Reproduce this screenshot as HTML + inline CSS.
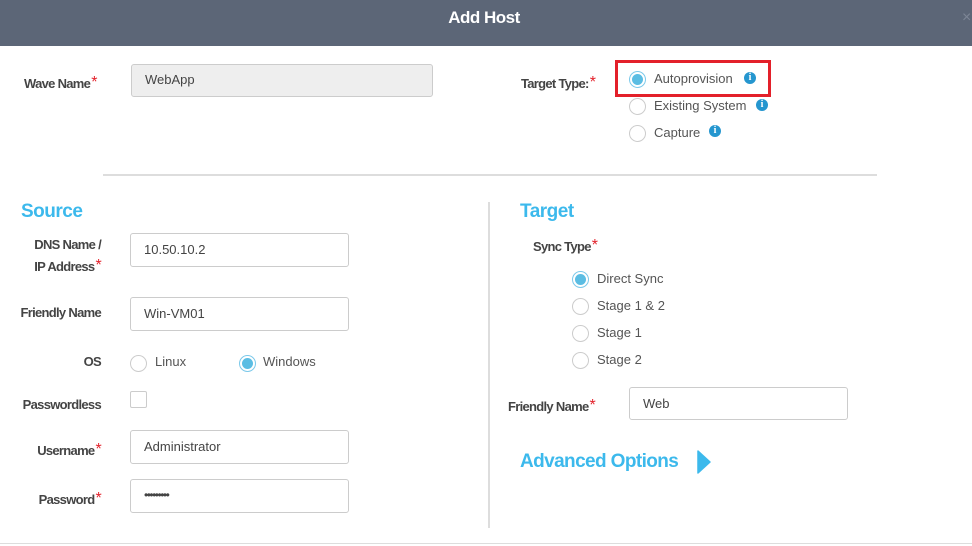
<!DOCTYPE html>
<html><head><meta charset="utf-8"><style>
*{margin:0;padding:0;box-sizing:border-box}
body{width:972px;height:546px;background:#fff;position:relative;overflow:hidden;font-family:"Liberation Sans",sans-serif}
.a{position:absolute}
.hdr{left:0;top:0;width:972px;height:46px;background:#5c6677}
.title{left:0;width:968px;top:8px;text-align:center;color:#fff;font-weight:bold;font-size:17px;letter-spacing:-0.5px}
.lbl{font-size:13px;font-weight:bold;color:#444;letter-spacing:-0.7px;white-space:nowrap}
.req{color:#e3202a;font-size:16px;font-weight:normal;position:relative;top:-1px;margin-left:1px}
.inp{border:1px solid #ccc;border-radius:3px;background:#fff;font-size:13px;color:#444;padding-left:13px;line-height:31px}
.rad{width:17px;height:17px;border:1px solid #ccc;border-radius:50%;background:#fff}
.rad.on{border-color:#7cc9ea}
.rad.on::after{content:"";position:absolute;left:2px;top:2px;width:11px;height:11px;border-radius:50%;background:#5bbde3}
.rt{font-size:13px;color:#555;white-space:nowrap}
.h{color:#3cb9ec;font-weight:bold;font-size:19px;letter-spacing:-0.5px}
.info{width:12px;height:12px;border-radius:50%;background:#2596cf;color:#fff;font-size:10px;font-weight:bold;text-align:center;line-height:12px;font-family:"Liberation Serif",serif}
</style></head><body>
<div class="a hdr"></div>
<div class="a title">Add Host</div>
<div class="a" style="left:962px;top:9px;color:#7d8696;font-size:16px">×</div>

<div class="a lbl" style="left:24px;top:75px">Wave Name<span class="req">*</span></div>
<div class="a inp" style="left:131px;top:64px;width:302px;height:33px;background:#eee;line-height:30px">WebApp</div>

<div class="a lbl" style="left:521px;top:75px">Target Type:<span class="req">*</span></div>
<div class="a" style="left:615px;top:60px;width:156px;height:37px;border:3px solid #e3202a"></div>
<div class="a rad on" style="left:629px;top:71px"></div>
<div class="a rt" style="left:654px;top:71px">Autoprovision</div>
<div class="a info" style="left:744px;top:72px">i</div>
<div class="a rad" style="left:629px;top:98px"></div>
<div class="a rt" style="left:654px;top:98px">Existing System</div>
<div class="a info" style="left:756px;top:99px">i</div>
<div class="a rad" style="left:629px;top:125px"></div>
<div class="a rt" style="left:654px;top:125px">Capture</div>
<div class="a info" style="left:709px;top:125px">i</div>

<div class="a" style="left:103px;top:174px;width:774px;height:2px;background:#ddd"></div>
<div class="a" style="left:488px;top:202px;width:2px;height:326px;background:#ddd"></div>
<div class="a" style="left:0;top:543px;width:972px;height:1px;background:#ddd"></div>

<div class="a h" style="left:21px;top:201px">Source</div>
<div class="a lbl" style="left:0;width:101px;text-align:right;top:234px;line-height:22px">DNS Name /<br>IP Address<span class="req">*</span></div>
<div class="a inp" style="left:130px;top:233px;width:219px;height:34px">10.50.10.2</div>
<div class="a lbl" style="left:0;width:101px;text-align:right;top:305px">Friendly Name</div>
<div class="a inp" style="left:130px;top:297px;width:219px;height:34px">Win-VM01</div>
<div class="a lbl" style="left:0;width:101px;text-align:right;top:354px">OS</div>
<div class="a rad" style="left:130px;top:355px"></div>
<div class="a rt" style="left:155px;top:354px">Linux</div>
<div class="a rad on" style="left:239px;top:355px"></div>
<div class="a rt" style="left:263px;top:354px">Windows</div>
<div class="a lbl" style="left:0;width:101px;text-align:right;top:397px">Passwordless</div>
<div class="a" style="left:130px;top:391px;width:17px;height:17px;border:1px solid #ccc;border-radius:2px"></div>
<div class="a lbl" style="left:0;width:101px;text-align:right;top:442px">Username<span class="req">*</span></div>
<div class="a inp" style="left:130px;top:430px;width:219px;height:34px">Administrator</div>
<div class="a lbl" style="left:0;width:101px;text-align:right;top:491px">Password<span class="req">*</span></div>
<div class="a inp" style="left:130px;top:479px;width:219px;height:34px;font-size:12px;letter-spacing:-1.5px">•••••••••</div>

<div class="a h" style="left:520px;top:201px">Target</div>
<div class="a lbl" style="left:533px;top:238px">Sync Type<span class="req">*</span></div>
<div class="a rad on" style="left:572px;top:271px"></div>
<div class="a rt" style="left:597px;top:271px">Direct Sync</div>
<div class="a rad" style="left:572px;top:298px"></div>
<div class="a rt" style="left:597px;top:298px">Stage 1 &amp; 2</div>
<div class="a rad" style="left:572px;top:325px"></div>
<div class="a rt" style="left:597px;top:325px">Stage 1</div>
<div class="a rad" style="left:572px;top:352px"></div>
<div class="a rt" style="left:597px;top:352px">Stage 2</div>
<div class="a lbl" style="left:508px;top:398px">Friendly Name<span class="req">*</span></div>
<div class="a inp" style="left:629px;top:387px;width:219px;height:33px">Web</div>
<div class="a h" style="left:520px;top:451px;font-size:19px;letter-spacing:-0.6px">Advanced Options</div>
<svg class="a" style="left:697px;top:450px" width="14" height="24"><path d="M1 1 L13 12 L1 23 Z" fill="#3cb9ec" stroke="#3cb9ec" stroke-linejoin="round" stroke-width="1.5"/></svg>
</body></html>
